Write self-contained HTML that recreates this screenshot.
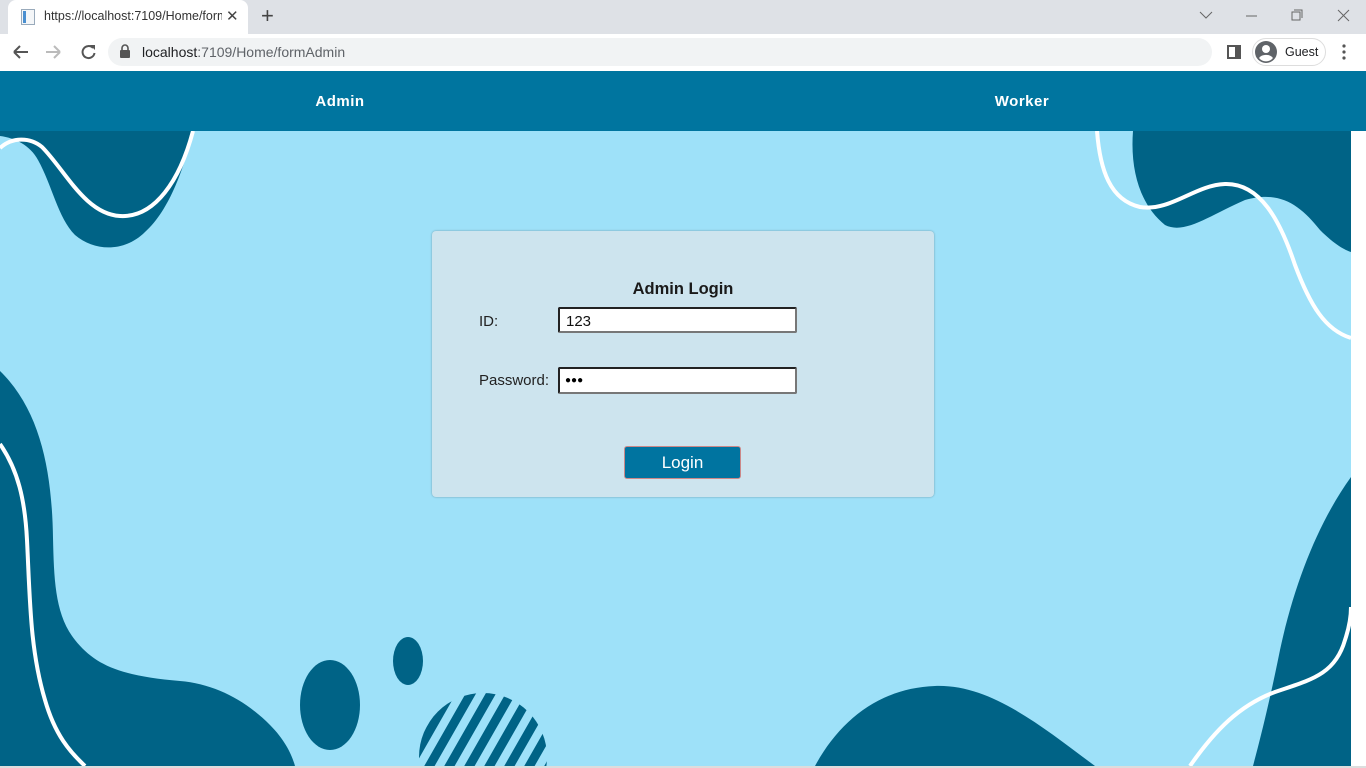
<!DOCTYPE html>
<html><head><meta charset="utf-8"><style>
*{margin:0;padding:0;box-sizing:border-box}
body{width:1366px;height:768px;overflow:hidden;background:#fff;font-family:"Liberation Sans","DejaVu Sans",sans-serif;position:relative}
.abs{position:absolute}
</style></head><body>
<div class="abs" style="left:0;top:0;width:1366px;height:34px;background:#dee1e6"></div>
<div class="abs" style="left:8px;top:0;width:240px;height:34px;background:#fff;border-radius:8px 8px 0 0"></div>
<div class="abs" style="left:21px;top:9px;width:14px;height:16px;border:1px solid #9ab;background:#f4f6f8"><div style="position:absolute;left:1px;top:1px;width:3px;height:12px;background:#4a8fd0"></div></div>
<div class="abs" style="left:44px;top:9px;font-size:12.5px;color:#333;width:178px;overflow:hidden;white-space:nowrap">https://localhost:7109/Home/formAdmin</div>
<div class="abs" style="left:226px;top:7px;font-size:15px;color:#444">✕</div>
<div class="abs" style="left:261px;top:3px;font-size:22px;color:#444">+</div>
<svg class="abs" style="left:1195px;top:8px" width="160" height="16"><path d="M5,4 l6,6 l6,-6" stroke="#666" fill="none"/><path d="M51,8 h11" stroke="#666"/><rect x="97" y="4" width="8" height="8" fill="none" stroke="#666"/><path d="M99,2 h8 v8" fill="none" stroke="#666"/><path d="M143,2 l11,11 M154,2 l-11,11" stroke="#666"/></svg>
<svg class="abs" style="left:10px;top:42px" width="90" height="20"><path d="M4,10 h14 M4,10 l6,-6 M4,10 l6,6" stroke="#555" stroke-width="2" fill="none"/><path d="M36,10 h14 M50,10 l-6,-6 M50,10 l-6,6" stroke="#bbb" stroke-width="2" fill="none"/><path d="M83,6 a6,6 0 1 0 1.5,5" stroke="#555" stroke-width="2" fill="none"/><path d="M80,3 l5,0 0,5z" fill="#555"/></svg>
<div class="abs" style="left:108px;top:38px;width:1104px;height:28px;background:#f1f3f4;border-radius:14px"></div>
<svg class="abs" style="left:119px;top:44px" width="12" height="14"><rect x="1" y="6" width="10" height="8" rx="1" fill="#555"/><path d="M3,6 v-2 a3,3 0 0 1 6,0 v2" stroke="#555" stroke-width="1.6" fill="none"/></svg>
<div class="abs" style="left:142px;top:44px;font-size:14px;color:#202124">localhost<span style="color:#5f6368">:7109/Home/formAdmin</span></div>
<div class="abs" style="left:1227px;top:45px;width:14px;height:14px;border:2px solid #555;border-right:6px solid #555"></div>
<div class="abs" style="left:1252px;top:38px;width:74px;height:28px;border:1px solid #ddd;border-radius:14px"></div>
<svg class="abs" style="left:1255px;top:41px" width="22" height="22"><circle cx="11" cy="11" r="11" fill="#5f6368"/><circle cx="11" cy="8" r="4" fill="#fff"/><path d="M4,17 a8,6 0 0 1 14,0 a9,9 0 0 1 -14,0z" fill="#fff"/></svg>
<div class="abs" style="left:1285px;top:45px;font-size:12.5px;color:#202124">Guest</div>
<svg class="abs" style="left:1342px;top:44px" width="4" height="16"><circle cx="2" cy="2" r="1.6" fill="#555"/><circle cx="2" cy="8" r="1.6" fill="#555"/><circle cx="2" cy="14" r="1.6" fill="#555"/></svg>
<div class="abs" style="left:0;top:71px;width:1366px;height:60px;background:#00759f"></div>
<div class="abs" style="left:290px;top:93px;width:100px;text-align:center;color:#fff;font-weight:bold;font-size:15px;letter-spacing:0.5px">Admin</div>
<div class="abs" style="left:972px;top:93px;width:100px;text-align:center;color:#fff;font-weight:bold;font-size:15px;letter-spacing:0.5px">Worker</div>
<svg class="abs" style="left:0;top:131px" width="1351" height="635" viewBox="0 131 1351 635">
<defs><clipPath id="cc"><circle cx="483" cy="757" r="64"/></clipPath></defs>
<rect x="0" y="131" width="1351" height="635" fill="#9ee1f9"/>
<path d="M0,131 L193,131 C185,165 170,210 145,232 C125,252 95,252 75,235 C58,218 52,185 38,160 C30,145 15,138 0,136Z" fill="#006386"/>
<path d="M0,148 C12,137 30,137 42,147 C65,170 85,214 120,216 C155,218 180,180 193,131" stroke="#fff" stroke-width="4" fill="none"/>
<path d="M0,371 C40,410 52,470 53,538 C54,580 55,615 75,640 C95,665 120,676 180,681 C215,684 245,700 270,725 C285,740 292,755 295,766 L0,766Z" fill="#006386"/>
<path d="M0,444 C18,470 25,500 27,540 C30,600 30,650 45,700 C55,735 70,752 85,766" stroke="#fff" stroke-width="4" fill="none"/>
<ellipse cx="330" cy="705" rx="30" ry="45" fill="#006386"/>
<ellipse cx="408" cy="661" rx="15" ry="24" fill="#006386"/>
<g clip-path="url(#cc)" stroke="#006386" stroke-width="9">
<path d="M390,800 L470,660 M410,800 L490,660 M430,800 L510,660 M450,800 L530,660 M470,800 L550,660 M490,800 L570,660 M510,800 L590,660 M530,800 L610,660"/>
</g>
<path d="M815,766 C840,720 880,688 935,686 C990,684 1040,725 1095,766Z" fill="#006386"/>
<path d="M1351,477 C1320,520 1295,580 1280,650 C1270,700 1260,740 1253,766 L1351,766Z" fill="#006386"/>
<path d="M1190,766 C1215,730 1240,705 1275,692 C1310,680 1335,675 1345,640 C1350,625 1351,615 1351,607" stroke="#fff" stroke-width="4" fill="none"/>
<path d="M1133,131 C1130,170 1140,205 1165,225 C1185,235 1210,215 1245,200 C1280,190 1300,205 1320,230 C1335,245 1345,250 1351,252 L1351,131Z" fill="#006386"/>
<path d="M1097,131 C1100,170 1110,200 1140,207 C1170,212 1195,185 1225,184 C1260,183 1280,220 1295,265 C1310,305 1325,330 1351,338" stroke="#fff" stroke-width="4" fill="none"/>
</svg>
<div class="abs" style="left:0;top:766px;width:1366px;height:2px;background:#ddd"></div>
<div class="abs" style="left:432px;top:231px;width:502px;height:266px;background:#cde4ee;border-radius:4px;box-shadow:0 0 2px rgba(0,0,0,.3)"></div>
<div class="abs" style="left:583px;top:280px;width:200px;text-align:center;font-weight:bold;font-size:16.5px;color:#1a1a1a">Admin Login</div>
<div class="abs" style="left:479px;top:313px;font-size:15px;color:#222">ID:</div>
<div class="abs" style="left:479px;top:372px;font-size:15px;color:#222">Password:</div>
<div class="abs" style="left:558px;top:307px;width:239px;height:26px;background:#fff;border:2px solid #222;border-right-color:#777;border-bottom-color:#777;border-radius:2px;font-size:15px;padding:4px 6px;color:#111">123</div>
<div class="abs" style="left:558px;top:367px;width:239px;height:27px;background:#fff;border:2px solid #222;border-right-color:#777;border-bottom-color:#777;border-radius:2px;font-size:10px;padding:6px 5px;color:#000;letter-spacing:0px">●●●</div>
<div class="abs" style="left:624px;top:446px;width:117px;height:33px;background:#0074a0;border:1px solid #c88;border-radius:3px;color:#fff;font-size:17px;text-align:center;line-height:32px">Login</div>
</body></html>
